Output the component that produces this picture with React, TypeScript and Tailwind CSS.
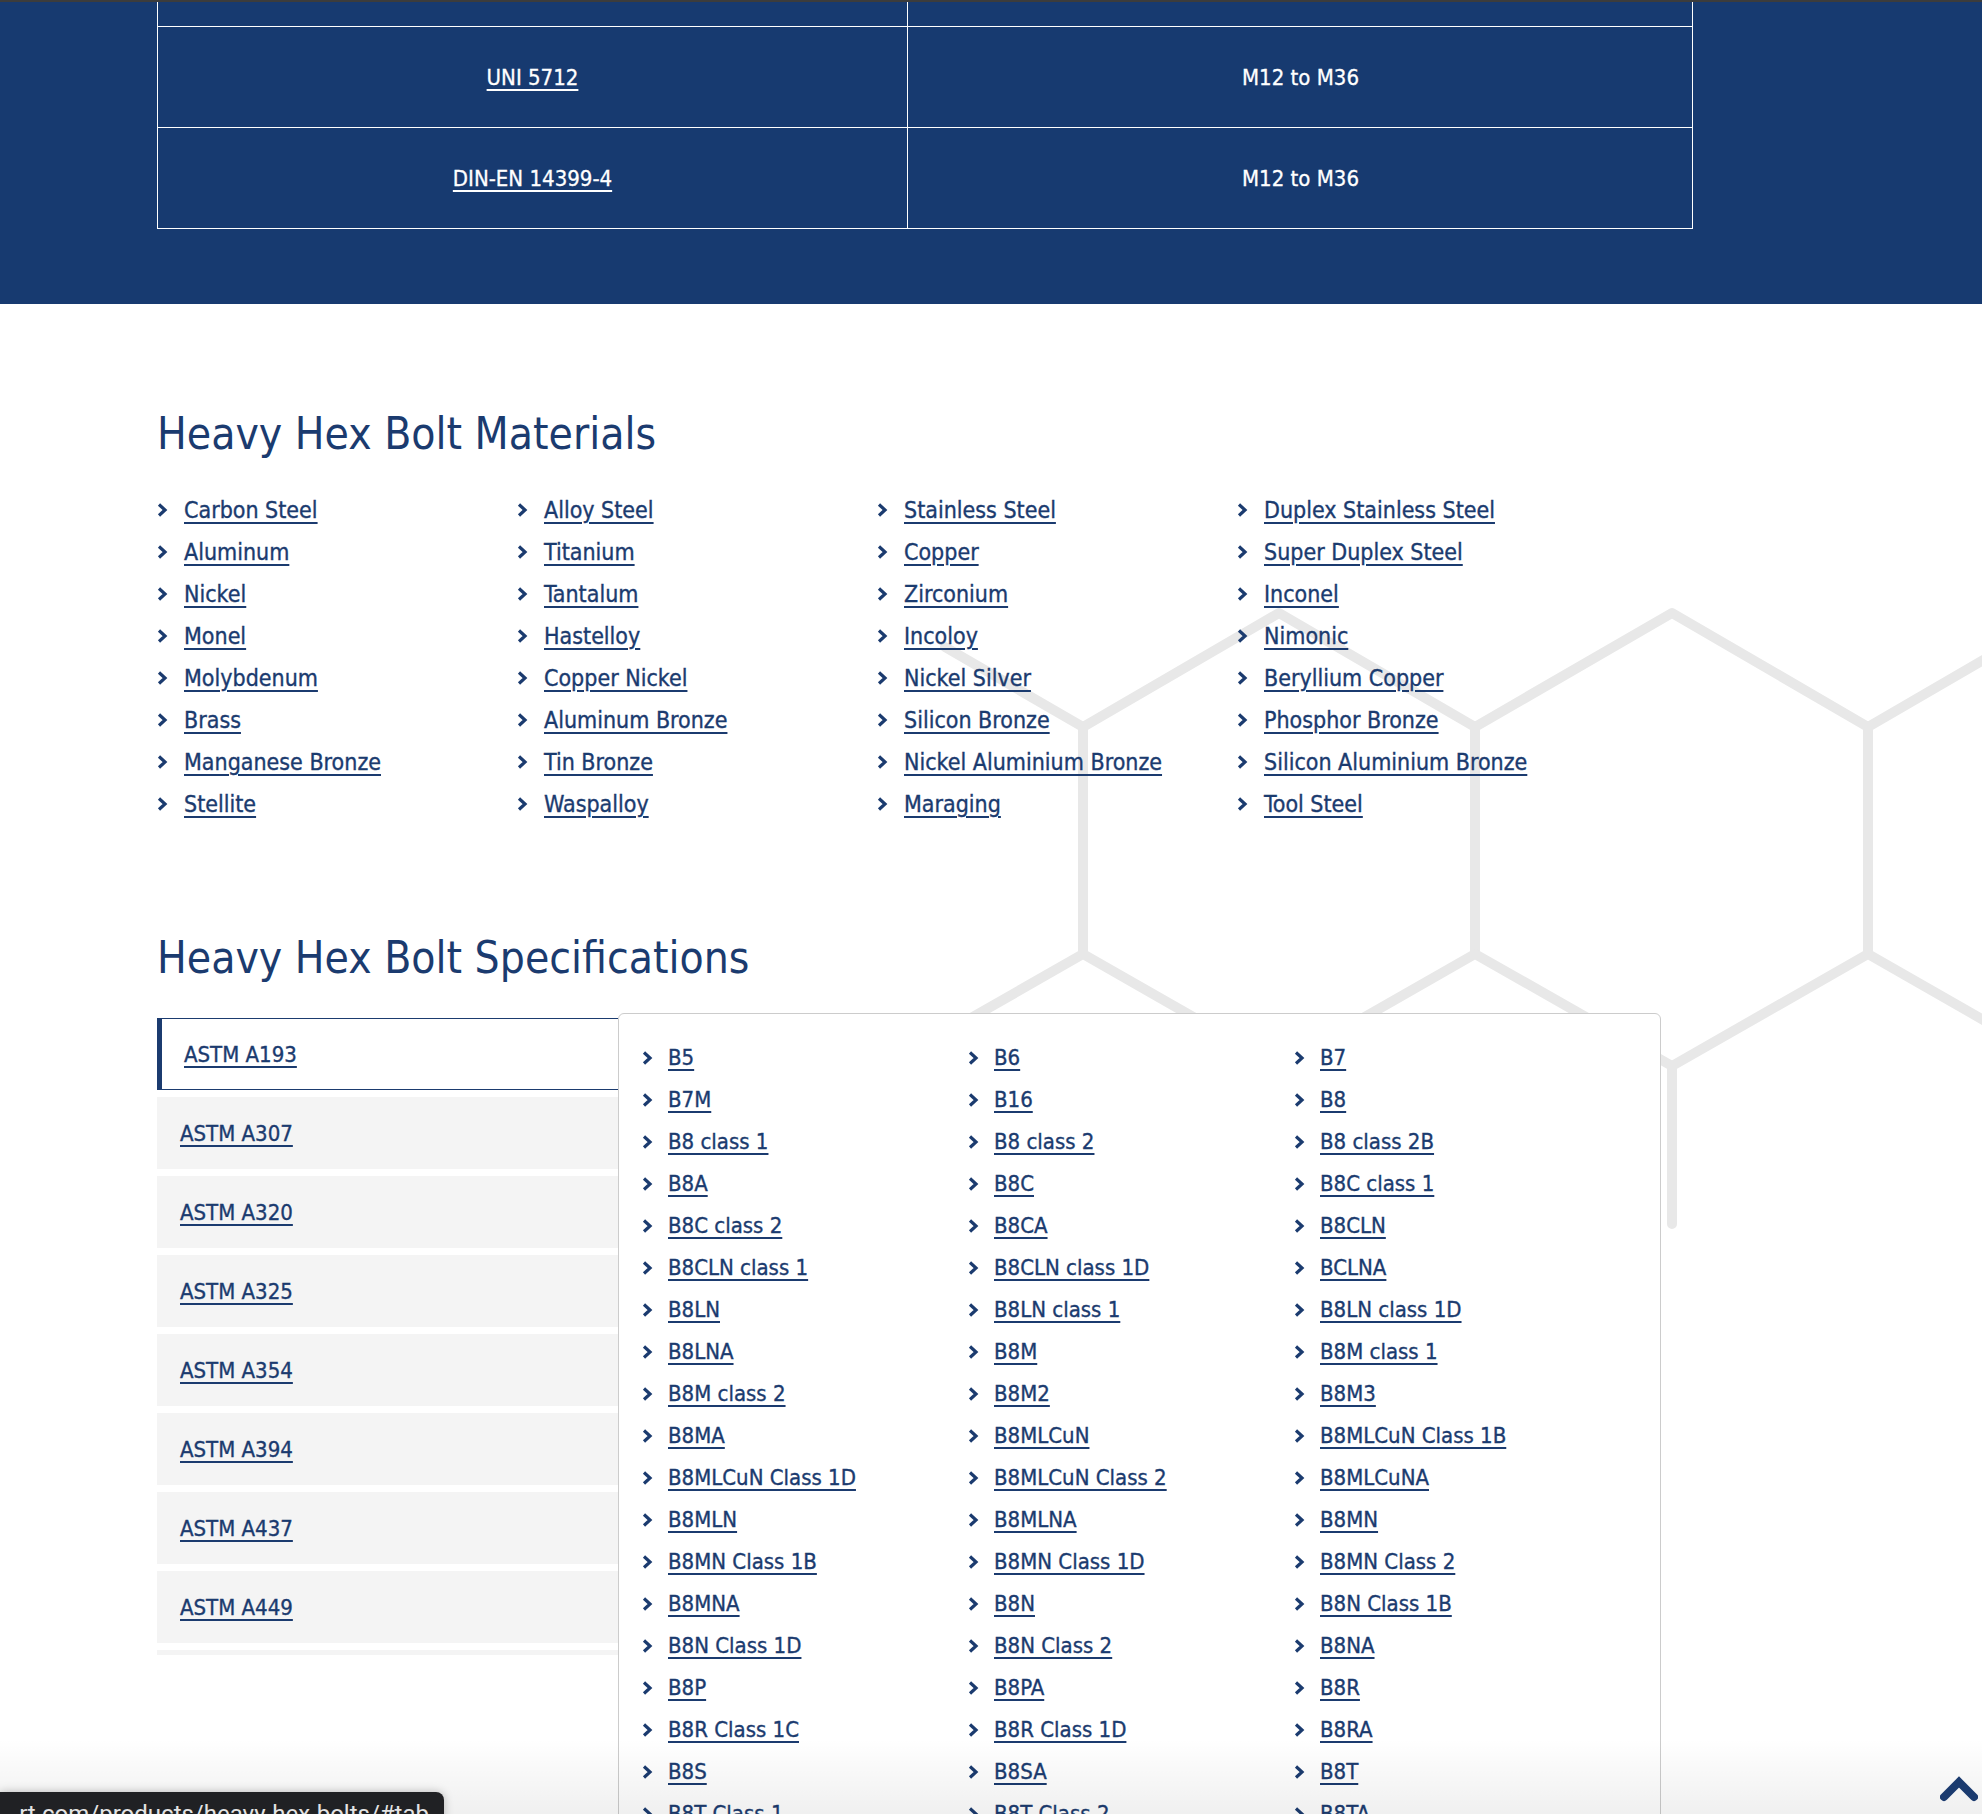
import React from "react";

const materials = [
  "Carbon Steel", "Alloy Steel", "Stainless Steel", "Duplex Stainless Steel",
  "Aluminum", "Titanium", "Copper", "Super Duplex Steel",
  "Nickel", "Tantalum", "Zirconium", "Inconel",
  "Monel", "Hastelloy", "Incoloy", "Nimonic",
  "Molybdenum", "Copper Nickel", "Nickel Silver", "Beryllium Copper",
  "Brass", "Aluminum Bronze", "Silicon Bronze", "Phosphor Bronze",
  "Manganese Bronze", "Tin Bronze", "Nickel Aluminium Bronze", "Silicon Aluminium Bronze",
  "Stellite", "Waspalloy", "Maraging", "Tool Steel",
];

const grades = [
  "B5", "B6", "B7",
  "B7M", "B16", "B8",
  "B8 class 1", "B8 class 2", "B8 class 2B",
  "B8A", "B8C", "B8C class 1",
  "B8C class 2", "B8CA", "B8CLN",
  "B8CLN class 1", "B8CLN class 1D", "BCLNA",
  "B8LN", "B8LN class 1", "B8LN class 1D",
  "B8LNA", "B8M", "B8M class 1",
  "B8M class 2", "B8M2", "B8M3",
  "B8MA", "B8MLCuN", "B8MLCuN Class 1B",
  "B8MLCuN Class 1D", "B8MLCuN Class 2", "B8MLCuNA",
  "B8MLN", "B8MLNA", "B8MN",
  "B8MN Class 1B", "B8MN Class 1D", "B8MN Class 2",
  "B8MNA", "B8N", "B8N Class 1B",
  "B8N Class 1D", "B8N Class 2", "B8NA",
  "B8P", "B8PA", "B8R",
  "B8R Class 1C", "B8R Class 1D", "B8RA",
  "B8S", "B8SA", "B8T",
  "B8T Class 1", "B8T Class 2", "B8TA",
];

const tabs = ["ASTM A307", "ASTM A320", "ASTM A325", "ASTM A354", "ASTM A394", "ASTM A437", "ASTM A449"];

function Chevron() {
  return (
    <svg width="11" height="14" viewBox="0 0 11 14" className="shrink-0">
      <polyline points="2,1.5 8,7 2,12.5" fill="none" stroke="#1b3b6f" strokeWidth="3.2" strokeLinejoin="miter" />
    </svg>
  );
}

const link = "text-[#1b3b6f] underline decoration-2 underline-offset-[4px] [-webkit-text-stroke:0.35px_#1b3b6f]";

export default function App() {
  return (
    <div className="relative w-[1982px] h-[1814px] overflow-hidden bg-white font-['DejaVu_Sans_Condensed','Liberation_Sans',sans-serif]">
      {/* hexagon background decoration */}
      <svg className="absolute left-0 top-0 z-0" width="1982" height="1814" viewBox="0 0 1982 1814">
        <g fill="none" stroke="#e8e8e8" strokeWidth="10" strokeLinecap="round" strokeLinejoin="round">
          <path d="M945 647 L1083 727 L1279 613 L1475 727 L1672 613 L1868 727 L2064 613" />
          <path d="M1083 727 V954 M1475 727 V954 M1868 727 V954" />
          <path d="M887 1066 L1083 954 L1279 1066 L1475 954 L1672 1066 L1868 954 L2064 1066" />
          <path d="M1672 1066 V1224 M1279 1066 V1200" />
        </g>
      </svg>

      <div className="relative z-10">
        {/* blue band with table */}
        <section className="relative h-[304px] bg-[#173a70]">
          <div className="absolute left-0 top-0 h-[2px] w-full bg-[#3c3c3c]" />
          <div className="ml-[157px] grid w-[1536px] grid-cols-[750px_785px] border-l border-r border-white text-[22px] text-white [-webkit-text-stroke:0.3px_white]">
            <div className="h-[27px] border-b border-r border-white" />
            <div className="h-[27px] border-b border-white" />
            <div className="flex h-[101px] items-center justify-center border-b border-r border-white">
              <span className="underline decoration-2 underline-offset-[4px]">UNI 5712</span>
            </div>
            <div className="flex h-[101px] items-center justify-center border-b border-white">M12 to M36</div>
            <div className="flex h-[101px] items-center justify-center border-b border-r border-white">
              <span className="underline decoration-2 underline-offset-[4px]">DIN-EN 14399-4</span>
            </div>
            <div className="flex h-[101px] items-center justify-center border-b border-white">M12 to M36</div>
          </div>
        </section>

        {/* materials */}
        <section className="pl-[157px] pt-[104px]">
          <h2 className="text-[44px] leading-[52px] text-[#1b3b6f]">Heavy Hex Bolt Materials</h2>
          <div className="mt-[29px] grid w-[1440px] grid-cols-4">
            {materials.map((m) => (
              <div key={m} className="flex h-[42px] items-center gap-[16px] text-[23px] leading-[42px]">
                <Chevron />
                <a className={link}>{m}</a>
              </div>
            ))}
          </div>
        </section>

        {/* specifications */}
        <section className="pl-[157px] pt-[107px]">
          <h2 className="text-[44px] leading-[52px] text-[#1b3b6f]">Heavy Hex Bolt Specifications</h2>
          <div className="mt-[29px] flex items-start">
            <div className="mt-[5px] flex w-[461px] flex-col gap-[7px] text-[22px]">
              <div className="flex h-[72px] items-center border-y border-l-[5px] border-[#1b3b6f] bg-white pl-[22px]">
                <a className={link}>ASTM A193</a>
              </div>
              {tabs.map((t) => (
                <div key={t} className="flex h-[72px] items-center bg-[#f4f4f4] pl-[23px]">
                  <a className={link}>{t}</a>
                </div>
              ))}
              <div className="h-[5px] bg-[#f4f4f4]" />
            </div>
            <div className="w-[1043px] rounded-t-[6px] border border-[#cccccc] bg-white pl-[23px] pt-[23px]">
              <div className="grid grid-cols-[326px_326px_326px]">
                {grades.map((g) => (
                  <div key={g} className="flex h-[42px] items-center gap-[15px] text-[22px] leading-[42px]">
                    <Chevron />
                    <a className={link}>{g}</a>
                  </div>
                ))}
              </div>
            </div>
          </div>
        </section>
      </div>

      {/* bottom fade */}
      <div className="pointer-events-none absolute bottom-0 left-0 z-20 h-[75px] w-full bg-linear-to-b from-black/0 to-black/[0.06]" />

      {/* status bubble */}
      <div className="absolute left-0 top-[1792px] z-30 flex h-[44px] w-[444px] items-center justify-end overflow-hidden rounded-tr-[8px] bg-[#202124] pr-[15px] shadow-[0_0_10px_rgba(0,0,0,0.25)]">
        <span className="whitespace-nowrap font-['Roboto',sans-serif] text-[24px] text-[#e3e3e3]">rt.com/products/heavy-hex-bolts/#tab</span>
      </div>

      {/* scroll to top */}
      <svg className="absolute left-[1940px] top-[1776px] z-30" width="38" height="26" viewBox="0 0 38 26">
        <polyline points="4,21 19,6 34,21" fill="none" stroke="#1b3b6f" strokeWidth="8" strokeLinecap="round" strokeLinejoin="miter" />
      </svg>
    </div>
  );
}
